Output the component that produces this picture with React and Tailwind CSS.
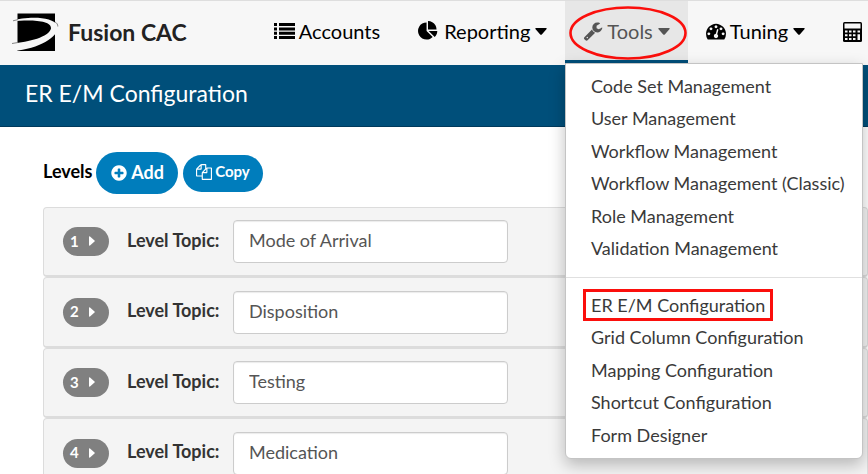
import clsx from 'clsx';

const navItems = [
  { name: 'Accounts', icon: ListIcon, style: 'ml-[69px] pl-[18px] pr-5' },
  { name: 'Reporting', icon: PieIcon, caret: true, style: 'px-[18px]' },
  { name: 'Tools', icon: WrenchIcon, caret: true, active: true, style: 'px-[18px]' },
  { name: 'Tuning', icon: GaugeIcon, caret: true, style: 'px-[18px]' },
];

const toolGroups = [
  [
    'Code Set Management',
    'User Management',
    'Workflow Management',
    'Workflow Management (Classic)',
    'Role Management',
    'Validation Management',
  ],
  [
    'ER E/M Configuration',
    'Grid Column Configuration',
    'Mapping Configuration',
    'Shortcut Configuration',
    'Form Designer',
  ],
];

const levels = ['Mode of Arrival', 'Disposition', 'Testing', 'Medication'];

function Glyph({ d, className }) {
  return (
    <svg viewBox="0 0 1792 1792" fill="currentColor" className={clsx('shrink-0', className)} aria-hidden="true">
      <path d={d} />
    </svg>
  );
}

function ListIcon() {
  return (
    <svg viewBox="0 0 21 16" fill="currentColor" className="h-4 w-[21px] shrink-0" aria-hidden="true">
      <path d="M0 0h3v3H0zM5 0h16v3H5zM0 4.4h3v3H0zM5 4.4h16v3H5zM0 8.8h3v3H0zM5 8.8h16v3H5zM0 13h3v3H0zM5 13h16v3H5z" />
    </svg>
  );
}

function PieIcon() {
  return (
    <Glyph
      className="mr-[2px] size-5"
      d="M768 890l546 546q-106 108-247.5 168t-298.5 60q-209 0-385.5-103t-279.5-279.5-103-385.5 103-385.5 279.5-279.5 385.5-103v762zm187 6h773q0 157-60 298.5t-168 247.5zm709-128h-768v-768q209 0 385.5 103t279.5 279.5 103 385.5z"
    />
  );
}

function WrenchIcon() {
  return (
    <Glyph
      className="size-5"
      d="M448 1472q0-26-19-45t-45-19-45 19-19 45 19 45 45 19 45-19 19-45zm644-420l-682 682q-37 37-90 37-52 0-91-37l-106-108q-38-36-38-90 0-53 38-91l681-681q39 98 114.5 173.5t173.5 114.5zm634-435q0 39-23 106-47 134-164.5 217.5t-258.5 83.5q-185 0-316.5-131.5t-131.5-316.5 131.5-316.5 316.5-131.5q58 0 121.5 16.5t107.5 46.5q16 11 16 28t-16 28l-293 169v224l193 107q5-3 79-48.5t135.5-81 70.5-35.5q15 0 23.5 10t8.5 25z"
    />
  );
}

function GaugeIcon() {
  return (
    <Glyph
      className="size-5"
      d="M384 1152q0-53-37.5-90.5t-90.5-37.5-90.5 37.5-37.5 90.5 37.5 90.5 90.5 37.5 90.5-37.5 37.5-90.5zm192-448q0-53-37.5-90.5t-90.5-37.5-90.5 37.5-37.5 90.5 37.5 90.5 90.5 37.5 90.5-37.5 37.5-90.5zm428 481l101-382q6-26-7.5-48.5t-38.5-29.5-48 6.5-30 39.5l-101 382q-60 5-107 43.5t-63 98.5q-20 77 20 146t117 89 146-20 89-117q16-60-6-117t-72-91zm660-33q0-53-37.5-90.5t-90.5-37.5-90.5 37.5-37.5 90.5 37.5 90.5 90.5 37.5 90.5-37.5 37.5-90.5zm-640-640q0-53-37.5-90.5t-90.5-37.5-90.5 37.5-37.5 90.5 37.5 90.5 90.5 37.5 90.5-37.5 37.5-90.5zm448 192q0-53-37.5-90.5t-90.5-37.5-90.5 37.5-37.5 90.5 37.5 90.5 90.5 37.5 90.5-37.5 37.5-90.5zm320 448q0 261-141 483-19 29-54 29h-1402q-35 0-54-29-141-221-141-483 0-182 71-348t191-286 286-191 348-71 348 71 286 191 191 286 71 348z"
    />
  );
}

function PlusIcon() {
  return (
    <Glyph
      className="mt-[2px] size-[18px]"
      d="M1344 960v-128q0-26-19-45t-45-19h-256v-256q0-26-19-45t-45-19h-128q-26 0-45 19t-19 45v256h-256q-26 0-45 19t-19 45v128q0 26 19 45t45 19h256v256q0 26 19 45t45 19h128q26 0 45-19t19-45v-256h256q26 0 45-19t19-45zm320-64q0 209-103 385.5t-279.5 279.5-385.5 103-385.5-103-279.5-279.5-103-385.5 103-385.5 279.5-279.5 385.5-103 385.5 103 279.5 279.5 103 385.5z"
    />
  );
}

function CopyIcon() {
  return (
    <Glyph
      className="size-4"
      d="M1696 384q40 0 68 28t28 68v1216q0 40-28 68t-68 28h-960q-40 0-68-28t-28-68v-288h-544q-40 0-68-28t-28-68v-672q0-40 20-88t48-76l408-408q28-28 76-48t88-20h416q40 0 68 28t28 68v328q68-40 128-40h416zm-544 213l-299 299h299v-299zm-640-384l-299 299h299v-299zm196 647l316-316v-416h-384v416q0 40-28 68t-68 28h-416v640h512v-256q0-40 20-88t48-76zm956 804v-1152h-384v416q0 40-28 68t-68 28h-416v640h896z"
    />
  );
}

function CalculatorIcon() {
  return (
    <svg viewBox="0 0 19 20" className="h-5 w-[19px] shrink-0" aria-hidden="true">
      <rect width="19" height="20" rx="1.5" fill="#000" />
      <path
        fill="#f7f7f7"
        d="M1.5 1.5h16v5h-16zM2 8.5h2.5v2H2zM6 8.5h2.5v2H6zM10 8.5h2.5v2H10zM14.5 8.5H17v2h-2.5zM2 12.2h2.5v2H2zM6 12.2h2.5v2H6zM10 12.2h2.5v2H10zM14.5 12.2H17V18h-2.5zM2 16h2.5v2H2zM6 16h2.5v2H6zM10 16h2.5v2H10z"
      />
    </svg>
  );
}

function Caret() {
  return (
    <svg viewBox="0 0 12 7" fill="currentColor" className="mt-px ml-px h-[7px] w-3 shrink-0" aria-hidden="true">
      <path d="M1 0h10q1.2 0 .6 1L6.8 6.4q-.8.9-1.6 0L.4 1Q-.2 0 1 0z" />
    </svg>
  );
}

function Logo() {
  return (
    <svg viewBox="0 0 48 40" className="h-10 w-12 shrink-0" role="img" aria-label="Fusion CAC logo">
      <rect x="6.5" y="1.5" width="37.5" height="37.5" fill="#000" />
      <path fill="#f7f7f7" d="M1 8.5C14 5 41 3 47 14c1 9-14 21-40 24.5L1 37v-5.5C18 30 38 25 40 16.5 41 8 18 7.5 1 9.5z" />
      <path fill="none" stroke="#777" strokeWidth=".9" d="M2 8.8l5-1.2M1 31.5l6-1M44 10c2 1 2.8 2.5 2.8 4.5" />
    </svg>
  );
}

function Navbar() {
  return (
    <nav className="flex h-[65px] items-stretch overflow-hidden border-t border-[#dedede] bg-[#f7f7f7] text-[20px] text-black">
      <a href="#home" className="flex shrink-0 items-center gap-[9px] pb-0.5 pl-[11px] text-[23px] font-bold text-[#222]">
        <Logo />
        Fusion CAC
      </a>
      {navItems.map(({ name, icon: Icon, caret, active, style }) => (
        <button
          key={name}
          type="button"
          className={clsx(
            'relative flex shrink-0 items-center gap-1 border-b-[5px] pt-px',
            style,
            active ? 'border-[#004f7a] bg-[#e7e7e7] text-[#555]' : 'border-transparent',
          )}
        >
          <Icon />
          {name}
          {caret && <Caret />}
          {active && (
            <svg viewBox="0 0 118 54" className="absolute top-[5px] left-1 h-[54px] w-[118px]" aria-hidden="true">
              <ellipse cx="59" cy="27" rx="57.5" ry="25.5" fill="none" stroke="#fb0f0c" strokeWidth="2.6" />
            </svg>
          )}
        </button>
      ))}
      <button type="button" aria-label="Calculator" className="flex shrink-0 items-center pb-[2px] pl-5">
        <CalculatorIcon />
      </button>
    </nav>
  );
}

function ToolsMenu() {
  return (
    <div className="absolute top-[63px] left-[565px] w-[298px] rounded-b-md border border-[#c4c4c4] bg-white pt-[5px] pb-[7px] text-[18px] text-[#3a3a3a] shadow-[0_6px_16px_rgba(0,0,0,0.25)]">
      {toolGroups.map((group, i) => (
        <ul key={group[0]} className={clsx(i > 0 && 'mt-[13px] border-t border-[#e0e0e0] pt-[10px]')}>
          {group.map((item) => (
            <li key={item} className="flex h-[33px] items-center pl-[17px] even:h-8">
              <a
                href="#tools"
                className={clsx(
                  'border-[3px] px-[5px] leading-[26px]',
                  item === 'ER E/M Configuration' ? 'border-[#fb0f0c]' : 'border-transparent',
                )}
              >
                {item}
              </a>
            </li>
          ))}
        </ul>
      ))}
    </div>
  );
}

function LevelRow({ number, topic }) {
  const id = `level-${number}`;
  return (
    <div className="flex h-[70px] items-center rounded border border-b-2 border-[#dcdcdc] bg-[#f4f4f4] pl-[19px] even:h-[71px]">
      <button
        type="button"
        aria-label={`Expand level ${number}`}
        className="flex h-[29px] w-[46px] items-center gap-[10px] rounded-full bg-[#808080] pb-px pl-[7px] text-[15px] font-bold text-white"
      >
        {number}
        <svg viewBox="0 0 6 10" fill="currentColor" className="h-[10px] w-[6px]" aria-hidden="true">
          <path d="M0 1q0-1 1-.5L5.5 4.4q.6.6 0 1.2L1 9.5Q0 10 0 9z" />
        </svg>
      </button>
      <label htmlFor={id} className="ml-[18px] w-[106px] pb-[3px] text-[18px] font-bold text-[#333]">
        Level Topic:
      </label>
      <input
        id={id}
        type="text"
        defaultValue={topic}
        className="h-[43px] w-[275px] rounded border border-[#ccc] bg-white px-[15px] pb-[3px] text-[18px] text-[#555] shadow-[inset_0_1px_1px_rgba(0,0,0,0.08)]"
      />
    </div>
  );
}

export default function App() {
  return (
    <div className="relative h-screen overflow-hidden bg-white font-[Lato,sans-serif]">
      <Navbar />
      <header className="flex h-[62px] items-center border-b border-[#003a5c] bg-[#004f7a] pb-1 pl-[25px]">
        <h1 className="text-[23px] text-white">ER E/M Configuration</h1>
      </header>
      <ToolsMenu />

      <main className="pt-[25px] pl-[43px]">
        <div className="flex items-center">
          <h2 className="w-[53px] pb-1 text-[18px] font-bold text-black">Levels</h2>
          <button
            type="button"
            className="flex h-[42px] w-[82px] items-center justify-center gap-[3px] rounded-full bg-[#007dbc] pb-[2px] text-[18px] font-bold text-white"
          >
            <PlusIcon />
            Add
          </button>
          <button
            type="button"
            className="ml-[5px] flex h-[37px] w-[80px] items-center justify-center gap-[3px] rounded-full bg-[#007dbc] pb-[3px] text-[15px] font-bold text-white"
          >
            <CopyIcon />
            Copy
          </button>
        </div>
        <div className="mt-[13px] flex flex-col">
          {levels.map((topic, i) => (
            <LevelRow key={topic} number={i + 1} topic={topic} />
          ))}
        </div>
      </main>
    </div>
  );
}
